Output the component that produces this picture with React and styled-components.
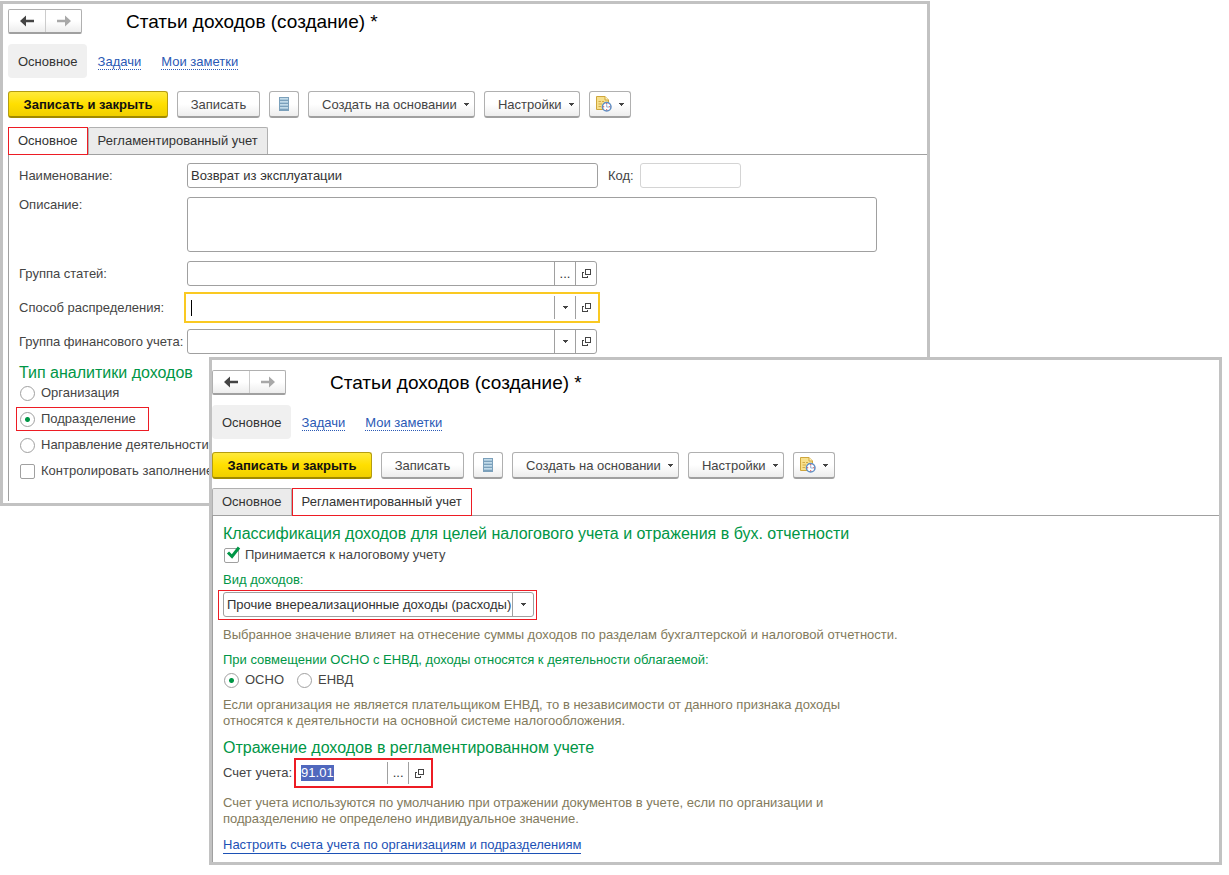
import {useEffect, useRef} from "react"
import styled, {createGlobalStyle, css} from "styled-components"

const BORDER = "#a0a0a0"
const GREEN = "#009646"
const RED = "#ed1c24"
const YELLOW = "#fac922"

function ArrowLeft() {
    return (
        <svg width="14" height="12" viewBox="0 0 14 12" aria-hidden="true">
            <path d="M0 6L6 0.5V4.8H14V7.2H6V11.5Z" fill="currentColor"/>
        </svg>
    )
}

function ArrowRight() {
    return (
        <svg width="14" height="12" viewBox="0 0 14 12" aria-hidden="true">
            <path d="M14 6L8 0.5V4.8H0V7.2H8V11.5Z" fill="currentColor"/>
        </svg>
    )
}

function Caret() {
    return (
        <svg width="5" height="3" viewBox="0 0 5 3" shapeRendering="crispEdges" aria-hidden="true">
            <path d="M0 0H5V1H4V2H3V3H2V2H1V1H0Z" fill="#444"/>
        </svg>
    )
}

function OpenIcon() {
    return (
        <svg width="9" height="9" viewBox="0 0 9 9" fill="#444" shapeRendering="crispEdges" aria-hidden="true">
            <path fillRule="evenodd" d="M3 0H9V6H3ZM4 1V5H8V1Z"/>
            <path d="M0 3H2V4H1V8H5V7H6V9H0Z"/>
        </svg>
    )
}

function ListIcon() {
    return (
        <svg width="10" height="14" viewBox="0 0 10 14" shapeRendering="crispEdges" aria-hidden="true">
            <rect width="10" height="14" fill="#7ba0bb"/>
            <path d="M1 1.5H9M1 4.5H9M1 7.5H9M1 10.5H9" stroke="#c3dbe9"/>
            <path d="M1 2.5H9M1 5.5H9M1 8.5H9M1 11.5H9" stroke="#a9c8dc"/>
        </svg>
    )
}

function ReminderIcon() {
    return (
        <svg width="16" height="16" viewBox="0 0 16 16" fill="none" aria-hidden="true">
            <path d="M0.5 0.5H9L12.5 4V13.5H0.5Z" fill="#f7e08c" stroke="#cfa63c"/>
            <path d="M9 0.5V4H12.5" fill="#fff2bd" stroke="#cfa63c"/>
            <path d="M2.5 5.5H5M6 5.5H8M2.5 8H6M2.5 10.5H5" stroke="#d2ab48"/>
            <circle cx="10.7" cy="10.7" r="4.3" fill="#fff" stroke="#5f8fc4" strokeWidth="1.5"/>
            <path d="M10.7 8.5V11H13" stroke="#8fb0d4"/>
            <path d="M10.2 7.2H11.2V8.2H10.2ZM10.2 13.2H11.2V14.2H10.2ZM7.2 10.2H8.2V11.2H7.2ZM13.2 10.2H14.2V11.2H13.2Z" fill="#d8232a"/>
        </svg>
    )
}

function CheckMark() {
    return (
        <svg width="15" height="14" viewBox="0 0 15 14" fill="none" aria-hidden="true">
            <path d="M2 6.5L6 10.5L13 1.5" stroke={GREEN} strokeWidth="3"/>
        </svg>
    )
}

function WindowTop({active}) {
    return (
        <>
            <TitleBar>
                <History>
                    <HistoryButton type="button" aria-label="Назад"><ArrowLeft/></HistoryButton>
                    <HistoryButton type="button" aria-label="Вперед" disabled><ArrowRight/></HistoryButton>
                </History>
                <Title>Статьи доходов (создание) *</Title>
            </TitleBar>
            <Sections>
                <CurrentSection>Основное</CurrentSection>
                <SectionLink href="#tasks">Задачи</SectionLink>
                <SectionLink href="#notes">Мои заметки</SectionLink>
            </Sections>
            <Toolbar>
                <PrimaryButton type="button">Записать и закрыть</PrimaryButton>
                <ToolButton type="button">Записать</ToolButton>
                <ToolButton type="button" $icon aria-label="Список"><ListIcon/></ToolButton>
                <ToolButton type="button" $menu>Создать на основании <Caret/></ToolButton>
                <ToolButton type="button" $menu>Настройки <Caret/></ToolButton>
                <ToolButton type="button" $icon aria-label="Напоминания"><ReminderIcon/><Caret/></ToolButton>
            </Toolbar>
            <Tabs role="tablist">
                <Tab type="button" role="tab" aria-selected={active === "main"}>Основное</Tab>
                <Tab type="button" role="tab" aria-selected={active === "regulated"}>Регламентированный учет</Tab>
            </Tabs>
        </>
    )
}

function MainWindow() {
    return (
        <BackWindow>
            <WindowTop active="main"/>
            <Form>
                <FormRow>
                    <FormLabel htmlFor="name">Наименование:</FormLabel>
                    <NameInput id="name" defaultValue="Возврат из эксплуатации"/>
                    <CodeLabel htmlFor="code">Код:</CodeLabel>
                    <CodeInput id="code" disabled/>
                </FormRow>
                <FormRow $top>
                    <FormLabel htmlFor="description">Описание:</FormLabel>
                    <Description id="description"/>
                </FormRow>
                <FormRow>
                    <FormLabel htmlFor="group">Группа статей:</FormLabel>
                    <FieldGroup>
                        <FieldInput id="group"/>
                        <FieldButton type="button" aria-label="Выбрать">...</FieldButton>
                        <FieldButton type="button" aria-label="Открыть"><OpenIcon/></FieldButton>
                    </FieldGroup>
                </FormRow>
                <FormRow>
                    <FormLabel htmlFor="method">Способ распределения:</FormLabel>
                    <FieldGroup $focused>
                        <TextCursor/>
                        <FieldInput id="method"/>
                        <FieldButton type="button" aria-label="Показать список"><Caret/></FieldButton>
                        <FieldButton type="button" aria-label="Открыть"><OpenIcon/></FieldButton>
                    </FieldGroup>
                </FormRow>
                <FormRow>
                    <FormLabel htmlFor="finance">Группа финансового учета:</FormLabel>
                    <FieldGroup>
                        <FieldInput id="finance"/>
                        <FieldButton type="button" aria-label="Показать список"><Caret/></FieldButton>
                        <FieldButton type="button" aria-label="Открыть"><OpenIcon/></FieldButton>
                    </FieldGroup>
                </FormRow>
                <Analytics>
                    <Legend>Тип аналитики доходов</Legend>
                    <Choices>
                        <Choice><Radio name="analytics"/>Организация</Choice>
                        <Choice $marked><Radio name="analytics" defaultChecked/>Подразделение</Choice>
                        <Choice><Radio name="analytics"/>Направление деятельности</Choice>
                        <Choice><CheckBox/>Контролировать заполнение</Choice>
                    </Choices>
                </Analytics>
            </Form>
        </BackWindow>
    )
}

function RegulatedWindow() {
    const accountRef = useRef(null)

    useEffect(() => {
        accountRef.current.focus()
        accountRef.current.select()
    }, [])

    return (
        <FrontWindow>
            <WindowTop active="regulated"/>
            <Panel>
                <Heading>Классификация доходов для целей налогового учета и отражения в бух. отчетности</Heading>
                <CheckRow>
                    <TickBox><CheckBox defaultChecked/><CheckMark/></TickBox>
                    Принимается к налоговому учету
                </CheckRow>
                <GreenLabel htmlFor="kind">Вид доходов:</GreenLabel>
                <SelectFrame>
                    <SelectBox>
                        <Select id="kind">
                            <option>Прочие внереализационные доходы (расходы)</option>
                        </Select>
                        <SelectArrow><Caret/></SelectArrow>
                    </SelectBox>
                </SelectFrame>
                <Hint>Выбранное значение влияет на отнесение суммы доходов по разделам бухгалтерской и налоговой отчетности.</Hint>
                <Activity>
                    <GreenLegend>При совмещении ОСНО с ЕНВД, доходы относятся к деятельности облагаемой:</GreenLegend>
                    <RadioRow>
                        <Choice><Radio name="tax" defaultChecked/>ОСНО</Choice>
                        <Choice><Radio name="tax"/>ЕНВД</Choice>
                    </RadioRow>
                </Activity>
                <Hint>
                    Если организация не является плательщиком ЕНВД, то в независимости от данного признака доходы
                    <br/>
                    относятся к деятельности на основной системе налогообложения.
                </Hint>
                <Heading>Отражение доходов в регламентированном учете</Heading>
                <AccountRow>
                    <label htmlFor="account">Счет учета:</label>
                    <AccountField>
                        <FieldInput id="account" ref={accountRef} defaultValue="91.01"/>
                        <FieldButton type="button" aria-label="Выбрать">...</FieldButton>
                        <FieldButton type="button" aria-label="Открыть"><OpenIcon/></FieldButton>
                    </AccountField>
                </AccountRow>
                <Hint>
                    Счет учета используются по умолчанию при отражении документов в учете, если по организации и
                    <br/>
                    подразделению не определено индивидуальное значение.
                </Hint>
                <SetupLink href="#accounts">Настроить счета учета по организациям и подразделениям</SetupLink>
            </Panel>
        </FrontWindow>
    )
}

function App() {
    return (
        <Desktop>
            <GlobalStyle/>
            <MainWindow/>
            <RegulatedWindow/>
        </Desktop>
    )
}

const GlobalStyle = createGlobalStyle`
  *, *::before, *::after {
    box-sizing: border-box;
  }

  body {
    margin: 0;
    background: #fff;
    color: #444;
    font: 13px/16px "Liberation Sans", Arial, sans-serif;
  }

  button, input, select, textarea {
    margin: 0;
    color: inherit;
    font: inherit;
  }

  svg {
    flex: none;
    display: block;
  }
`

const Desktop = styled.main`
  position: relative;
  min-height: 100vh;
  overflow: hidden;
`

const Window = styled.section`
  position: absolute;
  border: 3px solid #c2c2c2;
  background: #fff;
  white-space: nowrap;
`

const BackWindow = styled(Window)`
  top: 1px;
  left: 0;
  right: 299px;
  padding: 5px 0 2px 5px;
`

const FrontWindow = styled(Window)`
  top: 357px;
  left: 209px;
  right: 7px;
  padding-top: 10px;
`

const TitleBar = styled.header`
  display: flex;
  align-items: center;
  gap: 44px;
  height: 25px;
`

const History = styled.div`
  display: flex;
  height: 25px;
  border: 1px solid #b0b0b0;
  border-bottom: 2px solid #a0a0a0;
  border-radius: 2px;
  background: linear-gradient(#fff 50%, #ededed);
`

const HistoryButton = styled.button`
  display: flex;
  align-items: center;
  justify-content: center;
  width: 36px;
  padding: 0;
  border: 0;
  background: none;
  color: #444;

  &:disabled {
    color: #a8a8a8;
  }

  & + & {
    border-left: 1px solid #ccc;
  }
`

const Title = styled.h1`
  margin: 0;
  color: #000;
  font-size: 19px;
  font-weight: normal;
  line-height: 24px;
`

const Sections = styled.nav`
  display: flex;
  align-items: center;
  gap: 20px;
  height: 34px;
  margin-top: 10px;
`

const CurrentSection = styled.span`
  margin-right: -9px;
  padding: 10px 9px 8px 10px;
  border-radius: 4px;
  background: #f0f0f0;
  color: #333;
`

const SectionLink = styled.a`
  padding-top: 2px;
  border-bottom: 1px dotted #2a59b5;
  color: #2a59b5;
  line-height: 14px;
  text-decoration: none;
`

const Toolbar = styled.div`
  display: flex;
  gap: 9px;
  margin-top: 13px;
`

const ToolButton = styled.button`
  display: flex;
  align-items: center;
  justify-content: center;
  gap: 7px;
  height: 27px;
  padding: ${(props) => props.$icon ? "0 6px" : props.$menu ? "1px 5px 0 13px" : "1px 12px 0"};
  min-width: ${(props) => props.$icon ? "30px" : "83px"};
  border: 1px solid #b0b0b0;
  border-bottom: 2px solid #a0a0a0;
  border-radius: 3px;
  background: linear-gradient(#fff 50%, #ededed);
`

const PrimaryButton = styled(ToolButton)`
  min-width: 160px;
  border-color: #b59d10 #b59d10 #a08a00;
  background: linear-gradient(#ffea3c, #ffdf00 50%, #f0cf00);
  color: #111;
  font-weight: bold;
`

const Tabs = styled.div`
  display: flex;
  height: 28px;
  margin-top: 9px;
  border-bottom: 1px solid ${BORDER};
`

const Tab = styled.button`
  padding: 0 9px;
  border: 1px solid #b0b0b0;
  border-bottom: 0;
  border-radius: 2px 2px 0 0;
  background: #ebebeb;
  color: #333;

  &[aria-selected="true"] {
    z-index: 1;
    margin-bottom: -1px;
    border: 1px solid ${RED};
    border-radius: 0;
    background: #fff;
  }
`

const Form = styled.form`
  display: flex;
  flex-direction: column;
  gap: 9px;
  padding: 8px 0 18px 10px;
  border-left: 1px solid ${BORDER};
`

const FormRow = styled.div`
  display: flex;
  align-items: ${(props) => props.$top ? "flex-start" : "center"};
`

const FormLabel = styled.label`
  flex: none;
  width: 168px;
`

const inputBox = css`
  height: 25px;
  padding: 0 3px;
  border: 1px solid ${BORDER};
  border-radius: 3px;
  background: #fff;
  color: #333;
  outline: 0;
`

const NameInput = styled.input`
  ${inputBox}
  width: 411px;
`

const CodeLabel = styled.label`
  margin: 0 6px 0 10px;
`

const CodeInput = styled.input`
  ${inputBox}
  width: 101px;

  &:disabled {
    border-color: #d4d4d4;
  }
`

const Description = styled.textarea`
  ${inputBox}
  width: 690px;
  height: 55px;
  resize: none;
`

const FieldGroup = styled.div`
  ${inputBox}
  display: flex;
  align-items: center;
  width: 410px;
  padding: 0;

  ${(props) => props.$focused && css`
    border-color: transparent;
    border-radius: 0;
    outline: 2px solid ${YELLOW};
    outline-offset: 1px;
  `}
`

const FieldInput = styled.input`
  flex: 1;
  min-width: 0;
  padding: 0 3px;
  border: 0;
  background: none;
  outline: 0;

  &::selection {
    background: #5068bd;
    color: #fff;
  }
`

const FieldButton = styled.button`
  display: flex;
  align-items: center;
  justify-content: center;
  align-self: stretch;
  width: 21px;
  padding: 0;
  border: 0;
  border-left: 1px solid ${BORDER};
  background: none;
`

const TextCursor = styled.span`
  width: 1px;
  height: 16px;
  margin-left: 3px;
  background: #000;
`

const fieldset = css`
  min-width: 0;
  margin: 0;
  padding: 0;
  border: 0;
`

const Analytics = styled.fieldset`
  ${fieldset}
`

const heading = css`
  margin: 0;
  padding: 0;
  color: ${GREEN};
  font-size: 16px;
  font-weight: normal;
  line-height: 20px;
`

const Legend = styled.legend`
  ${heading}
`

const Heading = styled.h2`
  ${heading}
`

const Choices = styled.div`
  display: flex;
  flex-direction: column;
  align-items: flex-start;
  gap: 2px;
  margin-top: -2px;
`

const Choice = styled.label`
  display: flex;
  align-items: center;
  gap: 6px;
  height: 24px;
  margin-left: -3px;
  padding: 0 ${(props) => props.$marked ? "13px" : "12px"} 0 4px;
  outline: ${(props) => props.$marked ? `1px solid ${RED}` : "0"};
  outline-offset: -1px;
`

const CheckRow = styled(Choice)`
  height: 22px;
`

const Radio = styled.input.attrs({type: "radio"})`
  flex: none;
  appearance: none;
  width: 15px;
  height: 15px;
  border: 1px solid ${BORDER};
  border-radius: 50%;
  background: #fff;

  &:checked {
    background: radial-gradient(circle, ${GREEN} 2px, #fff 3px);
  }
`

const CheckBox = styled.input.attrs({type: "checkbox"})`
  flex: none;
  appearance: none;
  width: 15px;
  height: 15px;
  border: 1px solid ${BORDER};
  border-radius: 2px;
  background: #fff;
`

const TickBox = styled.span`
  display: grid;
  width: 15px;

  & > * {
    grid-area: 1 / 1;
  }

  & > svg {
    margin: -2px 0 0 2px;
    pointer-events: none;
  }
`

const Panel = styled.form`
  display: flex;
  flex-direction: column;
  align-items: flex-start;
  padding: 8px 0 8px 10px;
  border-left: 1px solid ${BORDER};
`

const GreenLabel = styled.label`
  margin-top: 6px;
  color: ${GREEN};
`

const SelectFrame = styled.div`
  margin: 2px 0 7px -5px;
  padding: 1px 2px 2px 4px;
  border: 1px solid ${RED};
`

const SelectBox = styled.div`
  ${inputBox}
  display: grid;
  grid-template-columns: auto 21px;
  height: 25px;
  padding: 0;
`

const Select = styled.select`
  grid-area: 1 / 1 / 2 / 3;
  appearance: none;
  padding: 0 21px 0 3px;
  border: 0;
  background: none;
  outline: 0;
`

const SelectArrow = styled.span`
  grid-area: 1 / 2;
  display: flex;
  align-items: center;
  justify-content: center;
  border-left: 1px solid ${BORDER};
  pointer-events: none;
`

const Hint = styled.p`
  margin: 0 0 9px;
  color: #827a5c;
`

const Activity = styled.fieldset`
  ${fieldset}
  margin-bottom: 5px;
`

const GreenLegend = styled.legend`
  padding: 0;
  color: ${GREEN};
`

const RadioRow = styled.div`
  display: flex;
`

const AccountRow = styled.div`
  display: flex;
  align-items: center;
  gap: 2px;
  margin-bottom: 7px;
`

const AccountField = styled(FieldGroup)`
  width: 139px;
  height: 30px;
  padding: 2px;
  border: 2px solid ${RED};
  border-radius: 0;
`

const SetupLink = styled.a`
  margin-top: 1px;
  border-bottom: 1px solid #1c51b5;
  color: #1c51b5;
  text-decoration: none;
`

export default App
